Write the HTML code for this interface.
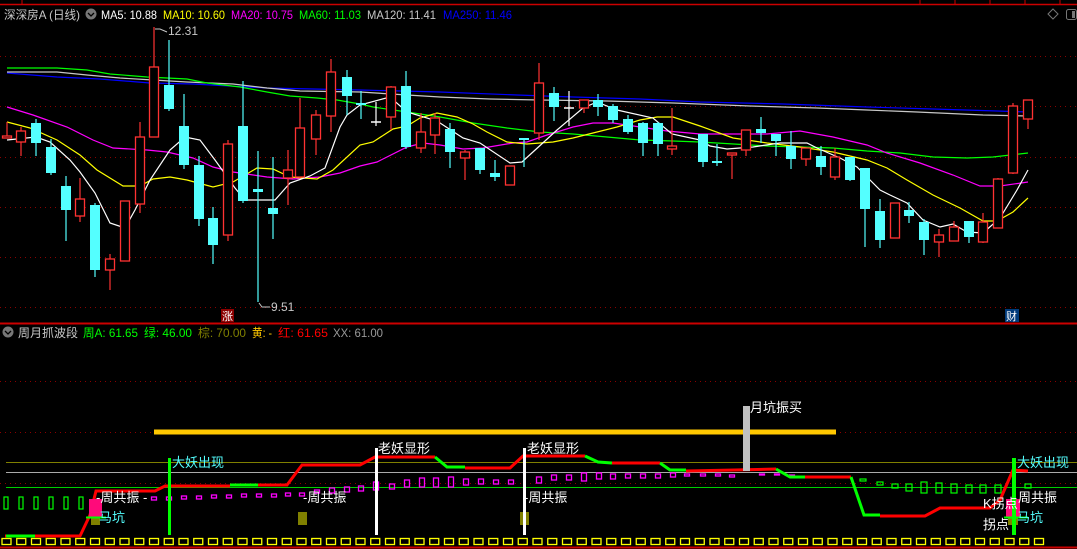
<!DOCTYPE html>
<html><head><meta charset="utf-8">
<style>
html,body{margin:0;padding:0;background:#000;width:1077px;height:549px;overflow:hidden}
svg{display:block}
text{font-family:"Liberation Sans","Noto Sans CJK SC",sans-serif}
</style></head><body>
<svg id="s" width="1077" height="549" viewBox="0 0 1077 549" xmlns="http://www.w3.org/2000/svg">
<rect width="1077" height="549" fill="#000"/>
<line x1="0" y1="4.5" x2="1077" y2="4.5" stroke="#c00" stroke-width="1.5"/>
<g stroke="#c00" stroke-width="1"><line x1="22" y1="0" x2="22" y2="4"/><line x1="920" y1="0" x2="920" y2="4"/><line x1="955" y1="0" x2="955" y2="4"/><line x1="990" y1="0" x2="990" y2="4"/><line x1="1025" y1="0" x2="1025" y2="4"/><line x1="1060" y1="0" x2="1060" y2="4"/></g>
<g id="grid" stroke="#8a0000" stroke-width="1" stroke-dasharray="1,4"></g>
<g font-size="12" lengthAdjust="spacingAndGlyphs">
<text x="4" y="19" fill="#c8c8c8" textLength="76" lengthAdjust="spacingAndGlyphs">深深房A (日线)</text>
<text x="101" y="19" fill="#fff" textLength="56" lengthAdjust="spacingAndGlyphs">MA5: 10.88</text>
<text x="163" y="19" fill="#ff0" textLength="62" lengthAdjust="spacingAndGlyphs">MA10: 10.60</text>
<text x="231" y="19" fill="#f0f" textLength="62" lengthAdjust="spacingAndGlyphs">MA20: 10.75</text>
<text x="299" y="19" fill="#0f0" textLength="62" lengthAdjust="spacingAndGlyphs">MA60: 11.03</text>
<text x="367" y="19" fill="#c8c8c8" textLength="69" lengthAdjust="spacingAndGlyphs">MA120: 11.41</text>
<text x="443" y="19" fill="#0000ff" textLength="69" lengthAdjust="spacingAndGlyphs">MA250: 11.46</text>
</g>
<circle cx="91" cy="14" r="5.5" fill="#777"/><path d="M88 13 L91 16 L94 13" stroke="#000" stroke-width="1.3" fill="none"/>
<path d="M1053 9 L1058 14 L1053 19 L1048 14 Z" stroke="#777" fill="none"/>
<rect x="1066.5" y="9.5" width="10" height="10" rx="2" stroke="#777" fill="none"/><rect x="1072" y="11" width="3" height="7" fill="#777"/>
<g id="ma" fill="none" stroke-width="1.2"></g>
<g id="candles"></g>
<text x="168" y="35" font-size="12" fill="#c8c8c8">12.31</text><path d="M155 29 L160 29 L167 32" stroke="#c8c8c8" fill="none"/>
<text x="271" y="311" font-size="12" fill="#c8c8c8">9.51</text><path d="M259 303 L262 307 L270 307" stroke="#c8c8c8" fill="none"/>
<rect x="221" y="309" width="13" height="13" fill="#8b0000"/><text x="222" y="320" font-size="11" fill="#fff">涨</text>
<rect x="1005" y="309" width="14" height="13" fill="#003a7a"/><text x="1006" y="320" font-size="11" fill="#fff">财</text>
<line x1="0" y1="323.5" x2="1077" y2="323.5" stroke="#c00" stroke-width="2"/>
<circle cx="8" cy="332" r="5.5" fill="#777"/><path d="M5 331 L8 334 L11 331" stroke="#000" stroke-width="1.3" fill="none"/>
<g font-size="12">
<text x="18" y="337" fill="#c8c8c8" textLength="60" lengthAdjust="spacingAndGlyphs">周月抓波段</text>
<text x="83" y="337" fill="#0f0" textLength="55" lengthAdjust="spacingAndGlyphs">周A: 61.65</text>
<text x="144" y="337" fill="#0f0" textLength="48" lengthAdjust="spacingAndGlyphs">绿: 46.00</text>
<text x="198" y="337" fill="#808000" textLength="48" lengthAdjust="spacingAndGlyphs">棕: 70.00</text>
<text x="252" y="337" fill="#ffc800" textLength="20" lengthAdjust="spacingAndGlyphs">黄: -</text>
<text x="278" y="337" fill="#f00" textLength="50" lengthAdjust="spacingAndGlyphs">红: 61.65</text>
<text x="333" y="337" fill="#999" textLength="50" lengthAdjust="spacingAndGlyphs">XX: 61.00</text>
</g>
<g id="lower"></g>
<line x1="0" y1="547.5" x2="1077" y2="547.5" stroke="#c00" stroke-width="2"/>
</svg>
<script>
var NS="http://www.w3.org/2000/svg";
function el(p,t,a){var e=document.createElementNS(NS,t);for(var k in a)e.setAttribute(k,a[k]);document.getElementById(p).appendChild(e);return e;}
[56,106,157,207,257,307,381,432,483].forEach(function(y){el("grid","line",{x1:0,y1:y+.5,x2:1077,y2:y+.5});});
function pl(pts,c){el("ma","polyline",{points:pts,stroke:c});}
pl("7,73 57,77 100,79 150,83 193,84 267,88 360,90 440,92 517,95 573,97 640,99 700,102 783,104 867,107 933,109 1028,112","#0000ff");
pl("7,72 57,72 87,75 120,78 153,80 187,82 233,84 267,88 300,91 360,92 407,95 440,97 490,99 540,100 607,101 673,103 750,106 817,108 867,110 917,112 983,115 1028,116","#c8c8c8");
pl("7,68 57,68 87,70 110,74 147,77 187,79 207,83 240,87 267,92 290,96 317,98 337,100 360,104 373,107 407,112 440,117 473,123 507,128 540,132 573,134 607,137 640,140 673,141 700,142 767,146 833,148 867,151 900,153 933,157 967,158 993,157 1028,153","#00ff00");
pl("7,107 33,115 67,127 93,140 113,148 147,150 167,152 193,158 213,167 233,172 267,177 293,179 320,177 340,173 360,166 377,162 407,147 423,143 440,145 463,149 483,148 513,143 527,142 547,135 573,127 593,123 613,123 640,127 667,131 700,134 767,134 800,131 833,137 867,145 887,153 920,163 953,175 980,186 1000,186 1028,182","#ff00ff");
pl("7,122 30,128 57,140 80,155 97,170 123,186 140,186 153,179 170,177 187,180 213,187 233,182 257,168 273,169 290,177 317,179 333,170 360,145 373,142 393,129 407,126 420,118 437,113 457,117 473,124 487,132 507,142 527,144 553,142 573,138 593,133 617,127 640,120 657,117 673,117 700,126 733,138 767,143 800,147 833,152 867,160 887,168 907,180 933,195 960,208 983,221 997,221 1013,212 1028,198","#ffff00");
pl("7,140 36,137 50,142 70,160 80,172 95,193 110,223 125,228 135,210 150,180 170,150 185,137 200,140 215,160 235,188 245,200 275,200 290,183 310,176 325,168 340,127 347,115 360,105 390,97 407,112 437,121 463,138 480,143 510,163 522,162 557,130 583,108 597,102 617,110 653,118 672,134 700,140 710,146 727,149 753,147 780,143 807,143 817,148 840,158 857,167 880,190 890,195 907,203 923,220 940,227 953,224 967,232 983,233 1000,218 1017,190 1028,170","#ffffff");
var C=[[7,136,138,122,138,'r'],[21,131,142,127,156,'r'],[36,123,143,119,156,'c'],[51,147,173,139,175,'c'],[66,186,210,176,241,'c'],[80,199,216,178,222,'r'],[95,205,270,203,277,'c'],[110,259,270,254,290,'r'],[125,201,261,201,261,'r'],[140,137,204,122,213,'r'],[154,67,137,27,137,'r'],[169,85,109,40,111,'c'],[184,126,165,94,169,'c'],[199,165,219,156,226,'c'],[213,218,245,207,264,'c'],[228,144,235,140,241,'r'],[243,126,201,81,203,'c'],[258,189,192,151,302,'c'],[273,208,214,157,239,'c'],[288,170,178,150,205,'r'],[300,128,177,98,178,'r'],[316,115,139,110,155,'r'],[331,72,116,59,132,'r'],[347,77,96,70,115,'c'],[361,103,105,91,119,'c'],[376,122,122,102,126,'w'],[391,87,117,86,130,'r'],[406,86,147,71,149,'c'],[421,132,148,113,153,'r'],[435,118,135,113,154,'r'],[450,129,152,123,168,'c'],[465,152,158,150,180,'r'],[480,148,170,148,174,'c'],[495,173,177,160,181,'c'],[510,166,185,166,185,'r'],[524,138,140,138,167,'c'],[539,83,133,63,140,'r'],[554,93,107,87,121,'c'],[569,108,108,91,126,'w'],[584,100,108,100,113,'r'],[598,100,107,94,116,'c'],[613,106,120,104,123,'c'],[628,119,132,115,134,'c'],[643,123,143,122,156,'c'],[658,123,144,122,156,'c'],[672,146,149,108,155,'r'],[703,134,162,134,167,'c'],[717,161,163,144,166,'c'],[732,153,155,153,179,'r'],[746,130,150,130,156,'r'],[761,129,133,117,143,'c'],[776,134,141,134,156,'c'],[791,146,159,131,169,'c'],[806,148,159,148,166,'r'],[821,156,167,146,175,'c'],[835,157,177,148,180,'r'],[850,157,180,157,181,'c'],[865,168,209,168,247,'c'],[880,211,240,199,248,'c'],[895,203,238,203,238,'r'],[909,210,216,202,223,'c'],[924,222,240,219,255,'c'],[939,235,242,229,257,'r'],[954,227,241,221,241,'r'],[969,221,237,221,243,'c'],[983,222,242,213,243,'r'],[998,179,228,178,228,'r'],[1013,106,173,103,174,'r'],[1028,100,119,100,129,'r']];
C.forEach(function(d){var x=d[0],t=d[5];
 if(t=='c'){el("candles","line",{x1:x,y1:d[3],x2:x,y2:d[4],stroke:"#54ffff","stroke-width":1.2});el("candles","rect",{x:x-5,y:d[1],width:10,height:Math.max(2,d[2]-d[1]),fill:"#54ffff"});}
 else if(t=='r'){el("candles","line",{x1:x,y1:d[3],x2:x,y2:d[4],stroke:"#ff3232","stroke-width":1.2});el("candles","rect",{x:x-4.5,y:d[1],width:9,height:Math.max(1.5,d[2]-d[1]),fill:"#000",stroke:"#ff3232","stroke-width":1.3});}
 else {el("candles","line",{x1:x,y1:d[3],x2:x,y2:d[4],stroke:"#fff","stroke-width":1.2});el("candles","line",{x1:x-5,y1:d[1],x2:x+5,y2:d[1],stroke:"#fff","stroke-width":1.5});}
});
var L="lower";
el(L,"line",{x1:6,y1:462.5,x2:1077,y2:462.5,stroke:"#808000"});
el(L,"line",{x1:6,y1:472.5,x2:1077,y2:472.5,stroke:"#aaa"});
el(L,"line",{x1:6,y1:487.5,x2:1077,y2:487.5,stroke:"#0c0"});
el(L,"line",{x1:154,y1:432,x2:836,y2:432,stroke:"#ffc800","stroke-width":5});
for(var x=6;x<1040;x+=14.75){el(L,"rect",{x:x-4,y:538.5,width:9,height:6,fill:"none",stroke:"#ff0","stroke-width":1.3});}
[6,21,36,51,66,81].forEach(function(x){el(L,"rect",{x:x-2,y:497,width:4,height:12,fill:"none",stroke:"#0f0","stroke-width":1.2});});
[[863,479,2],[880,482,3],[895,484,4],[909,484,7],[924,482,11],[939,483,10],[954,484,9],[969,485,8],[983,485,8],[998,485,8],[1028,484,4]].forEach(function(d){el(L,"rect",{x:d[0]-3,y:d[1],width:6,height:d[2],fill:"none",stroke:"#0f0","stroke-width":1.2});});
var M=[[154,497,3],[169,497,3],[184,496,3],[199,496,3],[214,495,3],[229,495,3],[244,494,3],[259,494,3],[274,494,3],[288,493,3],[302,493,3],[317,490,3],[332,488,5],[347,487,5],[361,486,5],[376,482,8],[392,484,5],[407,480,7],[422,478,9],[436,478,9],[451,477,10],[466,479,6],[481,479,5],[496,480,4],[511,480,4],[539,477,6],[554,475,5],[569,475,5],[584,473,8],[599,473,6],[613,474,5],[628,474,4],[643,474,4],[658,474,4],[673,473,4],[687,474,2],[703,474,2],[718,474,2],[732,475,2],[762,474,1],[777,474,1],[792,475,1]];
M.forEach(function(d){el(L,"rect",{x:d[0]-2.5,y:d[1],width:5,height:d[2],fill:"none",stroke:"#f0f","stroke-width":1.3});});
function sl(p,c){el(L,"polyline",{points:p,fill:"none",stroke:c,"stroke-width":3});}
sl("5,536 80,536 90,515 96,491 155,491 165,486 230,486","#ff0000");
sl("6,536 35,536","#00ff00");
sl("230,485 258,485","#00ff00");
sl("258,485 287,485 302,465 360,465 375,457 435,457","#ff0000");
sl("435,457 447,467 465,467","#00ff00");
sl("465,468 510,468 523,456 585,456","#ff0000");
sl("585,456 598,462 612,463","#00ff00");
sl("612,463 660,463","#ff0000");
sl("660,463 670,470 686,470","#00ff00");
sl("686,471 735,470 776,469","#ff0000");
sl("776,469 790,477 805,477","#00ff00");
sl("805,477 851,477","#ff0000");
sl("851,477 864,515 880,515","#00ff00");
sl("880,516 925,516 940,508 990,508 1000,500 1013,470 1028,471","#ff0000");
el(L,"rect",{x:89,y:499,width:13,height:18,fill:"#ff0a7a"});
el(L,"rect",{x:91,y:518,width:9,height:7,fill:"#808000"});
el(L,"line",{x1:86,y1:517.5,x2:106,y2:517.5,stroke:"#0f0","stroke-width":2});
el(L,"rect",{x:298,y:512,width:9,height:13,fill:"#808000"});
el(L,"rect",{x:520,y:512,width:9,height:13,fill:"#808000"});
el(L,"rect",{x:1006,y:499,width:14,height:18,fill:"#ff0a7a"});
el(L,"rect",{x:1008,y:518,width:10,height:7,fill:"#808000"});
el(L,"line",{x1:1004,y1:517.5,x2:1028,y2:517.5,stroke:"#0f0","stroke-width":2});
el(L,"rect",{x:168,y:458,width:3,height:77,fill:"#0f0"});
el(L,"rect",{x:375,y:448,width:3,height:87,fill:"#fff"});
el(L,"rect",{x:523,y:448,width:3,height:87,fill:"#fff"});
el(L,"rect",{x:743,y:406,width:7,height:65,fill:"#c0c0c0"});
el(L,"rect",{x:1012,y:458,width:4,height:77,fill:"#0f0"});
function tx(x,y,s,c){var e=el(L,"text",{x:x,y:y,"font-size":13,fill:c});e.textContent=s;}
tx(96,502,"-周共振 -","#fff");tx(99,522,"马坑","#54ffff");
tx(172,467,"大妖出现","#54ffff");tx(303,502,"-周共振","#fff");
tx(378,453,"老妖显形","#fff");tx(527,453,"老妖显形","#fff");
tx(524,502,"-周共振","#fff");tx(750,412,"月坑振买","#fff");
tx(1017,467,"大妖出现","#54ffff");tx(1018,502,"周共振","#fff");
tx(983,508,"K拐点","#fff");tx(1017,522,"马坑","#54ffff");tx(983,529,"拐点","#fff");
</script>
</body></html>
